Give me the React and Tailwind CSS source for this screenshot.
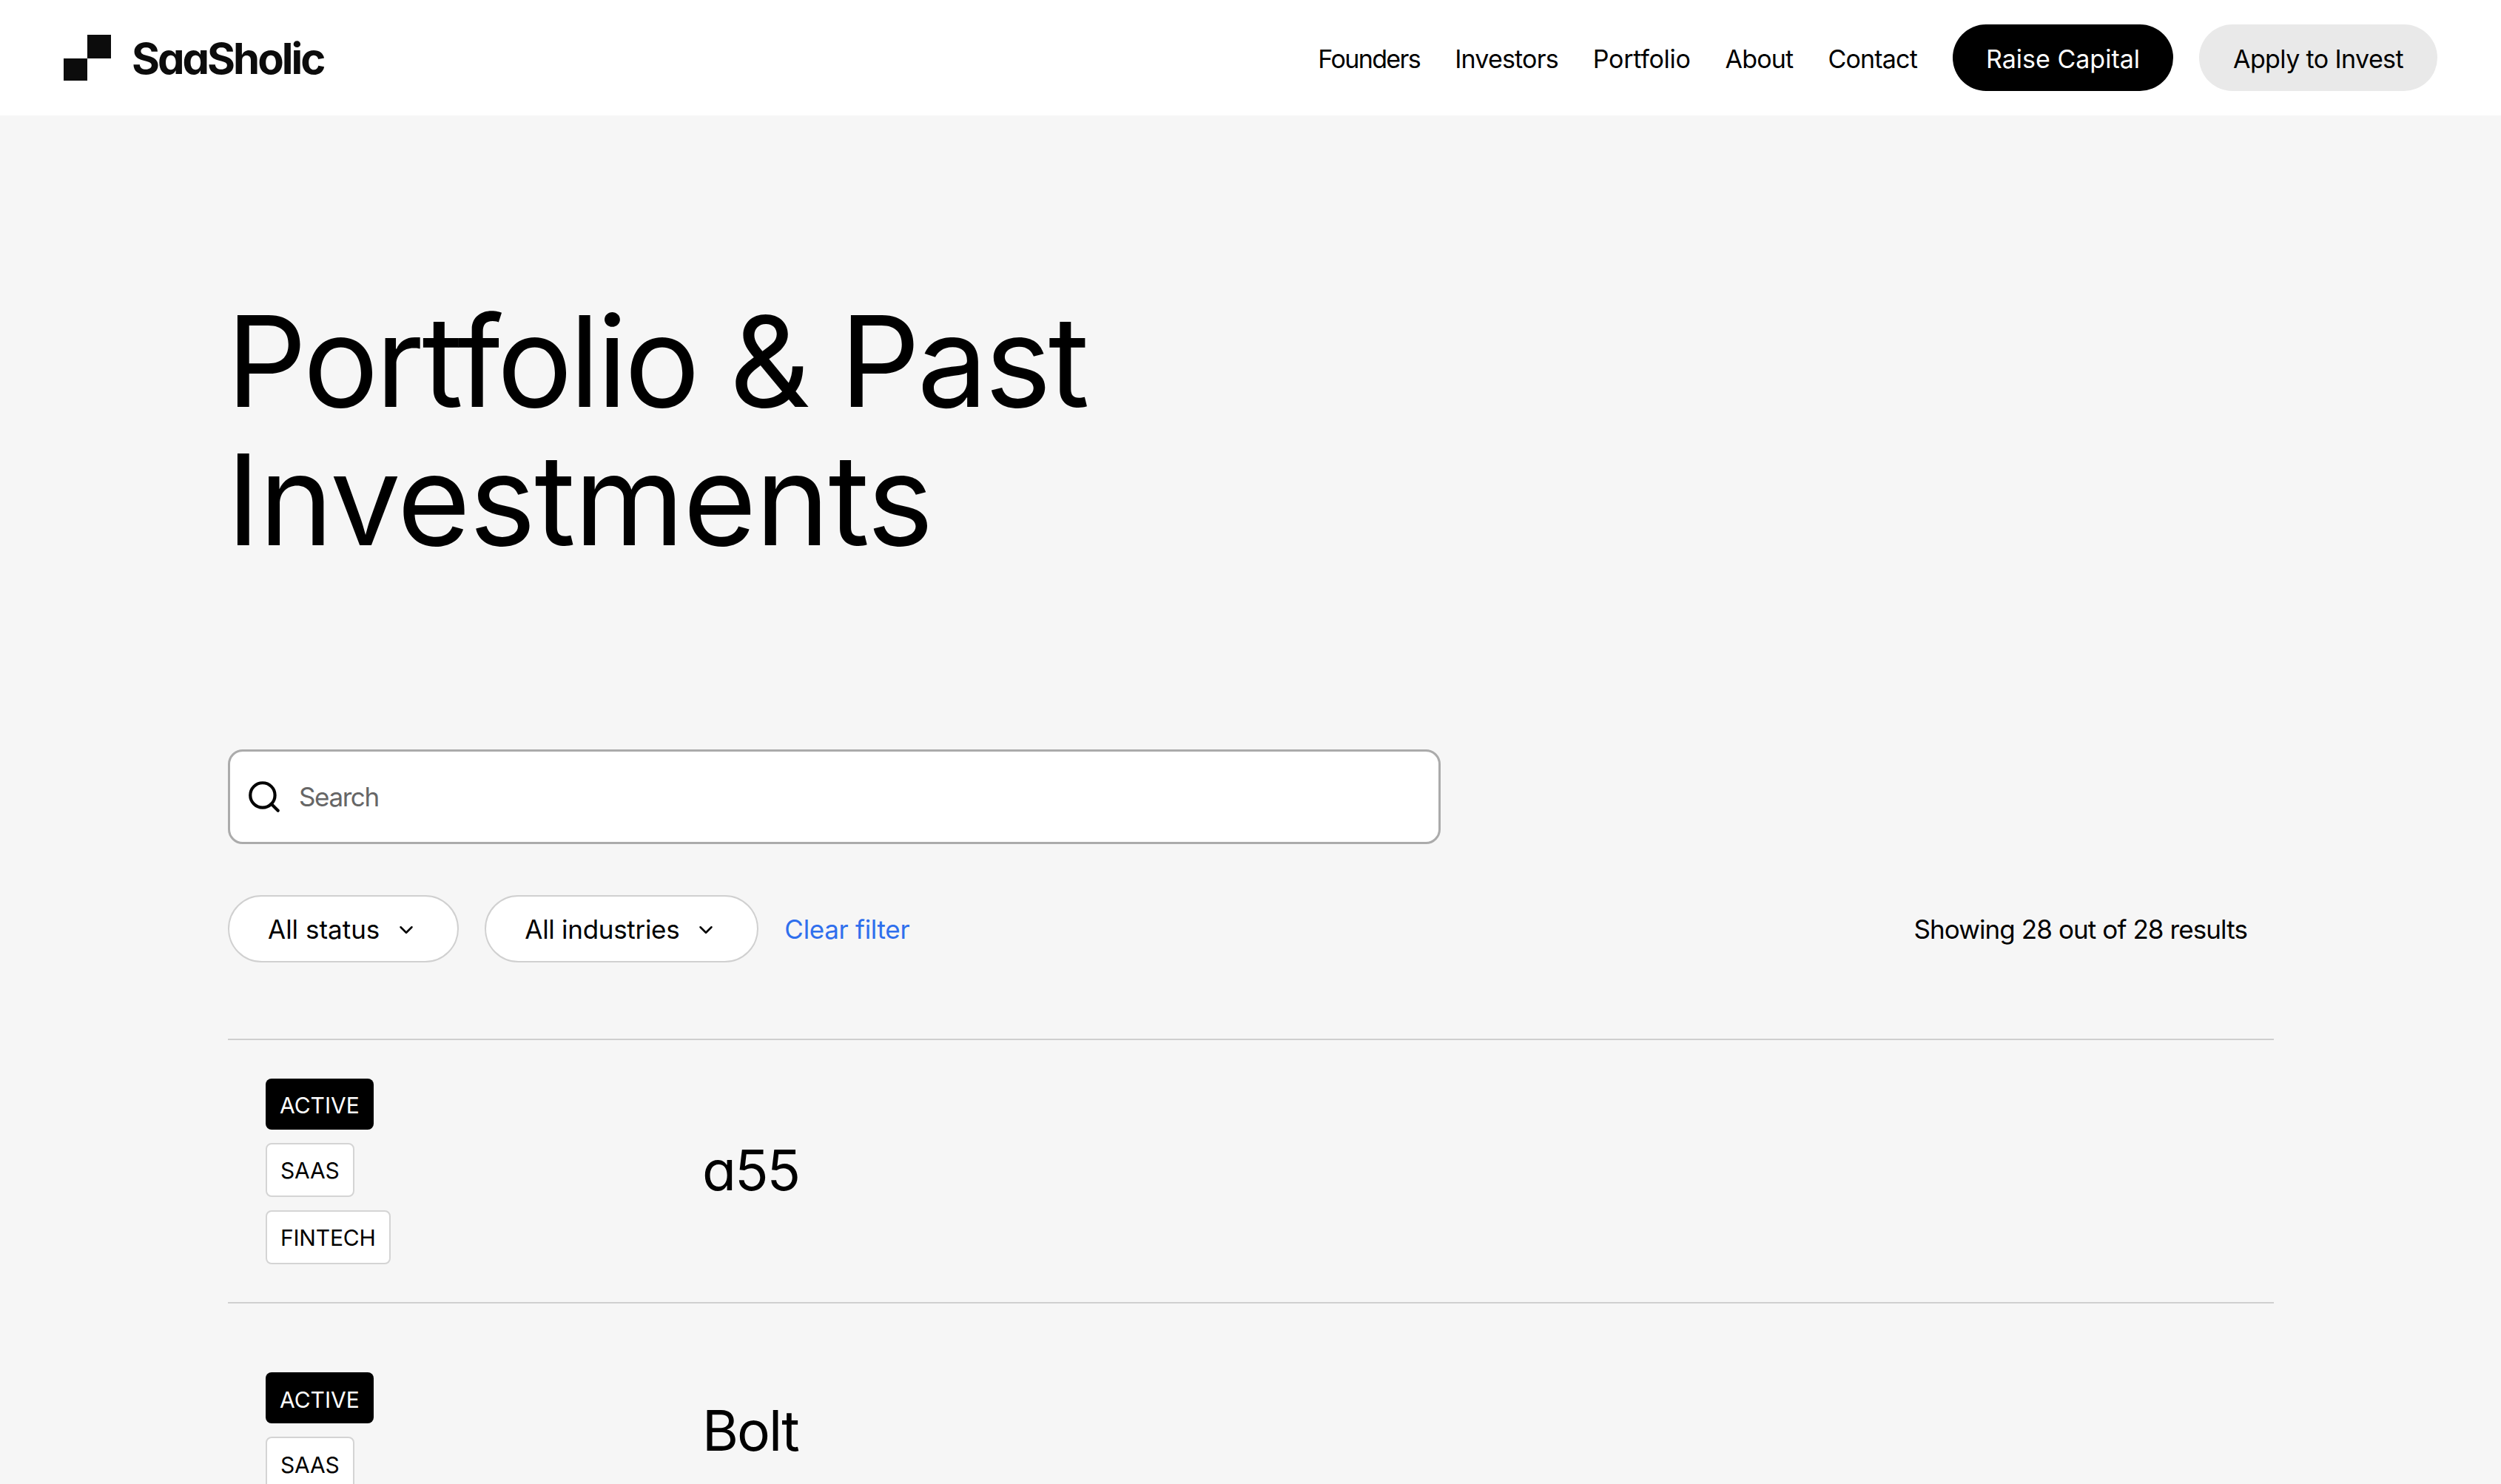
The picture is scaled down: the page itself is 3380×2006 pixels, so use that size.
import React from "react";
import { ChevronDown, Search } from "lucide-react";

const FONT = "font-['Inter','Liberation_Sans',sans-serif]";

function Tag({ dark, children }) {
    return (
        <div
            className={
                dark
                    ? "flex h-[69px] w-fit items-center rounded-[8px] bg-black px-[19px] pt-[5px] text-[30px] text-white"
                    : "flex h-[73px] w-fit items-center rounded-[8px] border-2 border-[#d4d4d4] bg-white px-[18px] pt-[3px] text-[30px] tracking-[-0.2px] text-black"
            }
        >
            {children}
        </div>
    );
}

function Row({ name, tags, height }) {
    return (
        <div className={"flex items-center border-t-2 border-[#cfcfcf] pl-[51px] " + height}>
            <div className="flex w-[590px] flex-col gap-[18px]">
                <Tag dark>ACTIVE</Tag>
                {tags.map((t) => (
                    <Tag key={t}>{t}</Tag>
                ))}
            </div>
            <div className="pb-[3px] text-[75px] leading-none tracking-[-2px] text-black [font-feature-settings:'cv11']">
                {name}
            </div>
        </div>
    );
}

function Filter({ label, tracking }) {
    return (
        <div
            className={
                "flex h-[91px] items-center gap-[21px] rounded-full border-2 border-[#d0d0d0] bg-white pl-[52px] pr-[54px] pt-[2px] text-[35px] text-black " +
                tracking
            }
        >
            {label}
            <ChevronDown size={30} strokeWidth={2} />
        </div>
    );
}

export default function App() {
    return (
        <div className={FONT + " h-[2006px] overflow-hidden bg-[#f6f6f6]"}>
            {/*header*/}
            <header className="flex h-[156px] items-center justify-between bg-white px-[86px]">
                <div className="flex items-center gap-[28px]">
                    <svg width="64" height="62" viewBox="0 0 64 62" fill="#0c0c0c">
                        <rect x="32" y="0" width="32" height="32" />
                        <rect x="0" y="32" width="32" height="30" />
                    </svg>
                    <div className="pt-[2px] text-[58px] font-bold leading-none tracking-[-3px] text-[#0c0c0c] [font-feature-settings:'cv11']">
                        SaaSholic
                    </div>
                </div>
                <nav className="flex items-center text-[34px] text-black">
                    <div className="flex gap-[47px] pt-[2px] tracking-[-0.8px]">
                        <span className="tracking-[-1.6px]">Founders</span>
                        <span>Investors</span>
                        <span className="tracking-[-0.3px]">Portfolio</span>
                        <span>About</span>
                        <span>Contact</span>
                    </div>
                    <div className="ml-[48px] flex h-[90px] items-center rounded-full bg-black px-[45px] pt-[2px] text-white">
                        Raise Capital
                    </div>
                    <div className="ml-[35px] flex h-[90px] items-center rounded-full bg-[#e9e9e9] px-[46px] pt-[2px] tracking-[-0.6px]">
                        Apply to Invest
                    </div>
                </nav>
            </header>

            <main className="pl-[308px] pr-[307px]">
                <h1 className="-ml-[2px] mt-[239px] text-[170px] font-normal leading-[187px] text-black">
                    <span className="block tracking-[-4px]">Portfolio &amp; Past</span>
                    <span className="block tracking-[-1.7px]">Investments</span>
                </h1>

                {/*search*/}
                <div className="mt-[244px] flex h-[128px] w-[1639px] items-center gap-[22px] rounded-[20px] border-[3px] border-[#ababab] bg-white pl-[21px] text-[35px] tracking-[-1.4px] text-[#666666]">
                    <Search size={50} strokeWidth={2} className="text-black" />
                    Search
                </div>

                {/*filters*/}
                <div className="mt-[69px] flex items-center gap-[35px]">
                    <Filter label="All status" tracking="tracking-normal" />
                    <Filter label="All industries" tracking="tracking-[-0.3px]" />
                    <span className="pt-[2px] text-[35px] tracking-[-0.3px] text-[#2f6fed]">Clear filter</span>
                    <span className="ml-auto pr-[36px] pt-[2px] text-[35px] tracking-[-0.9px] text-black">
                        Showing 28 out of 28 results
                    </span>
                </div>

                {/*list*/}
                <div className="mt-[103px]">
                    <Row name="a55" tags={["SAAS", "FINTECH"]} height="h-[356px]" />
                    <Row name="Bolt" tags={["SAAS"]} height="h-[348px]" />
                </div>
            </main>
        </div>
    );
}
